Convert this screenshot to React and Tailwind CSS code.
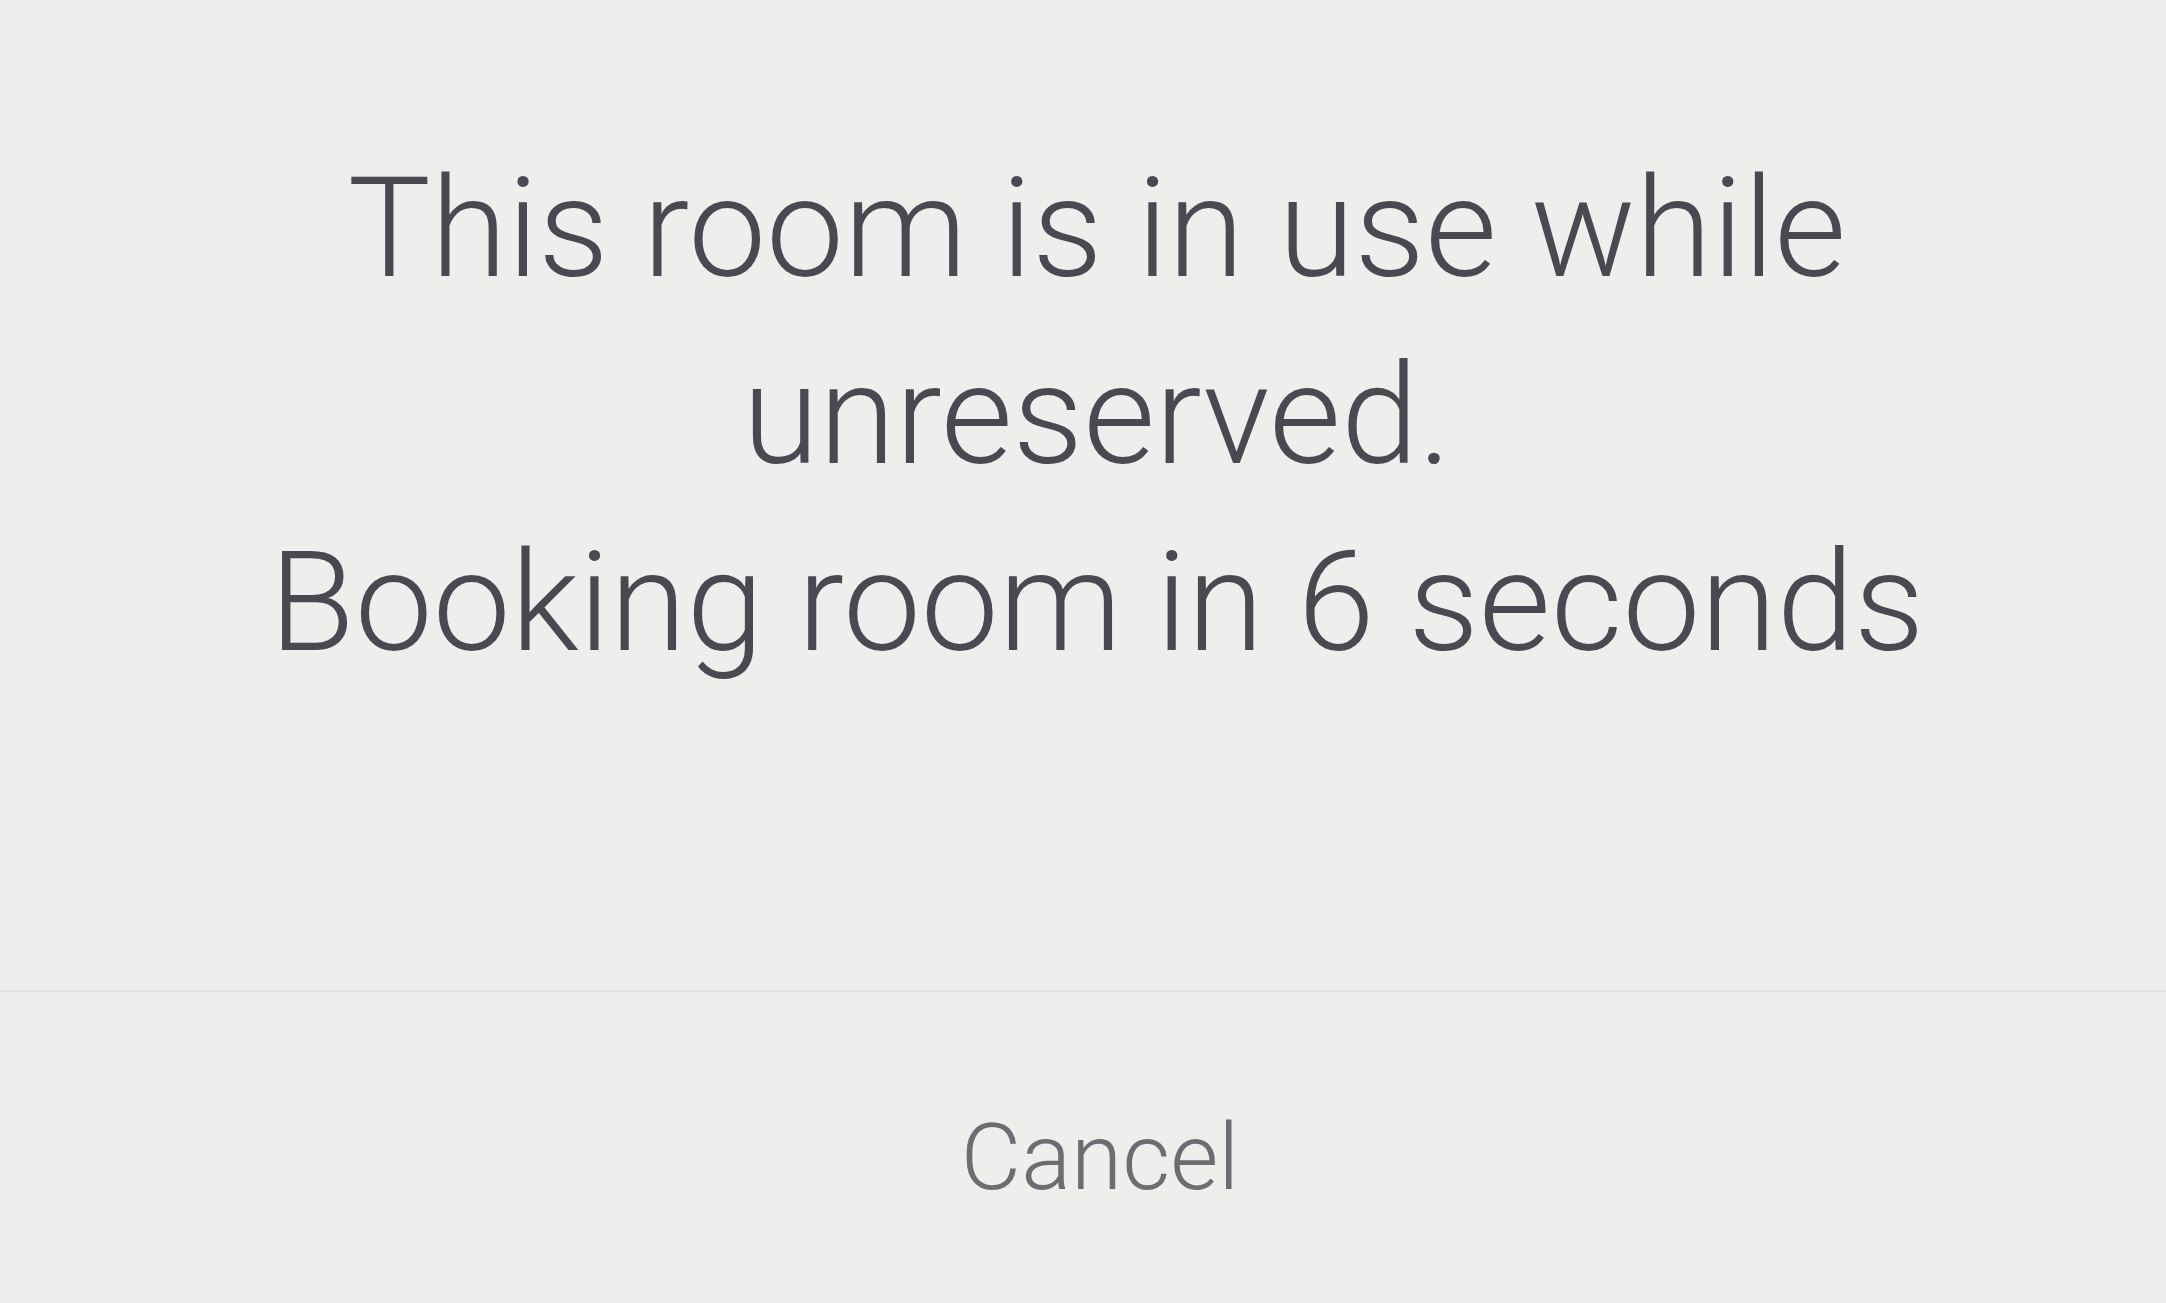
export default function App() {
  return (
    <div
      className="w-[2166px] h-[1303px] flex flex-col bg-[#efeeec] overflow-hidden"
      style={{ fontFamily: 'Roboto, "Liberation Sans", Arial, sans-serif' }}
    >
      <div className="h-[990px] pt-[135px] pl-[28px] flex flex-col items-center text-[#4a4952] text-[139px] font-light leading-[187px] text-center">
        <p>This room is in use while</p>
        <p>unreserved.</p>
        <p>Booking room in 6 seconds</p>
      </div>
      <div className="border-t-2 border-[#e2e0de] flex-1 flex justify-center pl-[34px] pt-[20px]">
        <button className="text-[93px] font-light leading-none text-[#6c6c72]">Cancel</button>
      </div>
    </div>
  );
}
